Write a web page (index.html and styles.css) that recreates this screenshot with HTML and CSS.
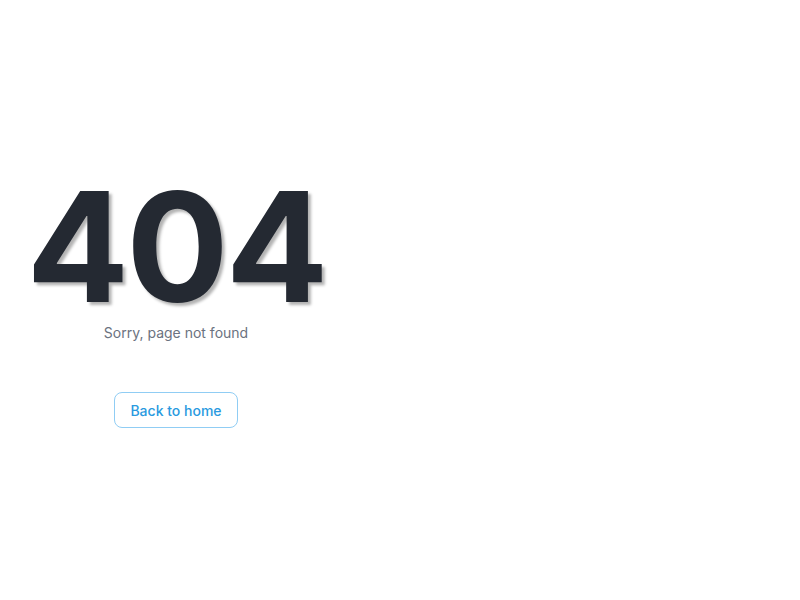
FILE: index.html
```html
<!DOCTYPE html>
<html>
<head>
<meta charset="utf-8">
<link rel="stylesheet" href="styles.css">
</head>
<body>
<main class="page">
  <section class="notfound">
    <h1 class="code">404</h1>
    <p class="message">Sorry, page not found</p>
    <a class="home-btn" href="#">Back to home</a>
  </section>
</main>
</body>
</html>
```

FILE: styles.css
```css
html, body {
  margin: 0;
  padding: 0;
  background: #ffffff;
}
.page {
  height: 600px;
  display: flex;
  align-items: flex-start;
}
.notfound {
  width: 352px;
  padding-top: 171px;
  display: flex;
  flex-direction: column;
  align-items: center;
}
.code {
  margin: 0;
  font-family: Inter, "Noto Sans", sans-serif;
  font-weight: 700;
  font-size: 152px;
  line-height: 152px;
  letter-spacing: -3px;
  color: #242932;
  text-shadow: 3px 3px 3px rgba(0, 0, 0, 0.3);
}
.message {
  margin: 0;
  font-family: Inter, "Noto Sans", sans-serif;
  font-size: 14px;
  line-height: 20px;
  color: #6b7280;
}
.home-btn {
  margin-top: 49px;
  display: inline-flex;
  align-items: center;
  justify-content: center;
  width: 124px;
  height: 36px;
  box-sizing: border-box;
  border: 1px solid #90cdf4;
  border-radius: 8px;
  font-family: Inter, "Noto Sans", sans-serif;
  font-size: 14px;
  font-weight: 500;
  color: #2a9ae0;
  text-decoration: none;
}
```
